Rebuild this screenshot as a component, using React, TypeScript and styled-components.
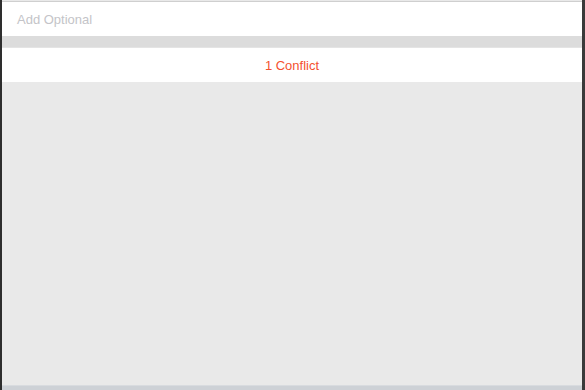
import React from 'react';
import styled, { createGlobalStyle } from 'styled-components';

const GlobalStyle = createGlobalStyle`
  html, body {
    margin: 0;
    padding: 0;
  }
  body {
    font-family: "Liberation Sans", Arial, sans-serif;
    background: #e9e9e9;
  }
`;

const Frame = styled.div`
  box-sizing: border-box;
  width: 585px;
  height: 390px;
  display: flex;
  flex-direction: column;
  background: #e9e9e9;
  border-left: 2px solid #2e2e2e;
  border-right: 3px solid #3a3a3a;
  overflow: hidden;
`;

const TopEdge = styled.div`
  height: 1px;
  margin-top: 1px;
  background: #cfcfcf;
`;

const Row = styled.div<{ $centered?: boolean }>`
  height: 34px;
  display: flex;
  align-items: center;
  justify-content: ${(p) => (p.$centered ? 'center' : 'flex-start')};
  padding: 0 15px;
  background: #ffffff;
`;

const Placeholder = styled.span`
  font-size: 13px;
  color: #c4c4c8;
  margin-top: 1px;
`;

const ConflictLabel = styled.span`
  font-size: 13px;
  color: #f4512f;
`;

const SectionGap = styled.div`
  height: 11px;
  background: #dcdcdc;
  border-bottom: 1px solid #e4e4e4;
`;

const Filler = styled.div`
  flex: 1;
  background: #e9e9e9;
`;

const BottomBar = styled.div`
  height: 4px;
  background: #cdd1d6;
  border-top: 1px solid #d8dbdf;
`;

const App: React.FC = () => (
  <>
    <GlobalStyle />
    <Frame>
      <TopEdge />
      <Row>
        <Placeholder>Add Optional</Placeholder>
      </Row>
      <SectionGap />
      <Row $centered>
        <ConflictLabel>1 Conflict</ConflictLabel>
      </Row>
      <Filler />
      <BottomBar />
    </Frame>
  </>
);

export default App;
